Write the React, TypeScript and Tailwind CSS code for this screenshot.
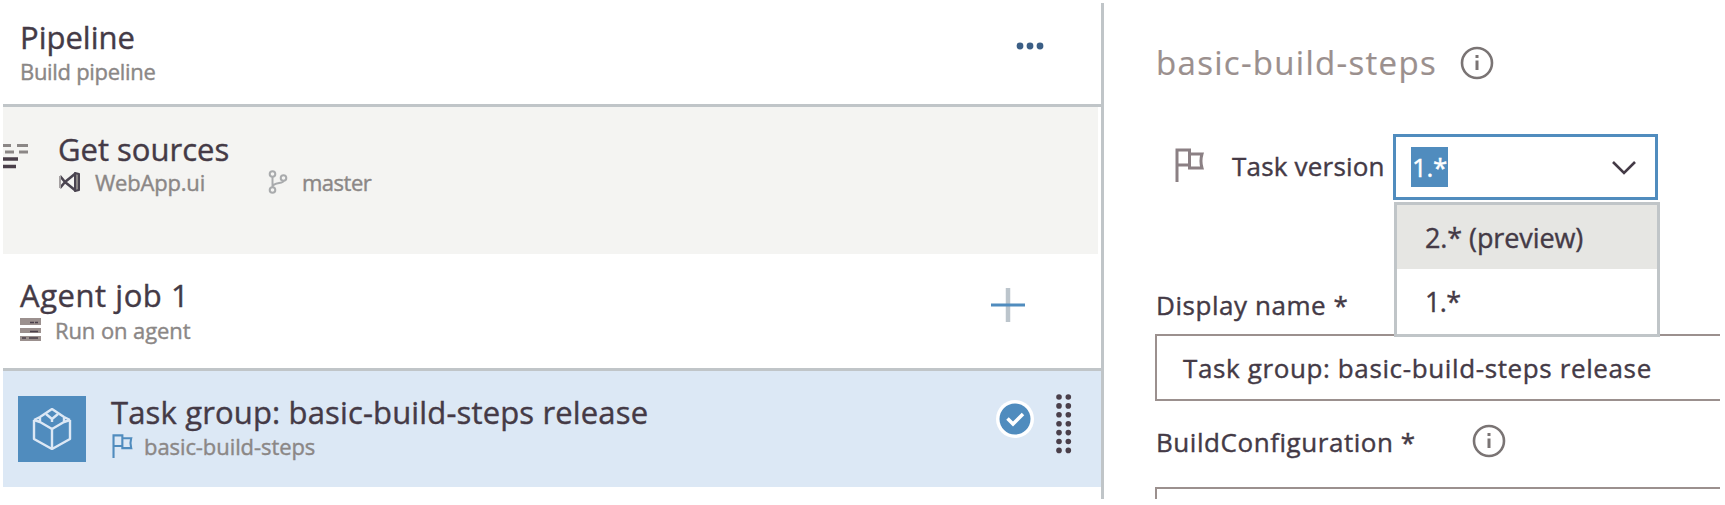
import type { ReactNode } from "react";

function Line({ className, children }: { className: string; children: ReactNode }) {
  return <span className={`block shrink-0 whitespace-nowrap ${className}`}>{children}</span>;
}

function Flag({ className }: { className: string }) {
  return (
    <svg className={className} viewBox="0 0 28 34" fill="none" stroke="currentColor" strokeWidth="3">
      <path d="M2 34V2H14.500V17H2M14.500 6H27C25.500 11 25.500 15 27 20H14.500V17" />
    </svg>
  );
}

function Info({ className }: { className: string }) {
  return (
    <svg className={className} viewBox="0 0 34 34" fill="none" stroke="currentColor" strokeWidth="2.6">
      <circle cx="17" cy="17" r="15" />
      <path d="M17 14.500V24M17 9V12" strokeWidth="3" />
    </svg>
  );
}

function Sources() {
  return (
    <svg className="h-[27px] w-[26px]" viewBox="0 0 26 27" fill="none">
      <path d="M0 2.500H8M14 2.500H25M2 9H11M16 9H25" stroke="#8b8786" strokeWidth="3" />
      <path d="M0 16H15M0 23.500H13" stroke="#4a3f4a" strokeWidth="3.500" />
    </svg>
  );
}

function VisualStudio() {
  return (
    <svg className="h-[22px] w-[23px]" viewBox="0 0 23 22" fill="none" stroke="#4a4450" strokeLinejoin="round">
      <path d="M2 5L7 11L2 17M7 11L18 2M7 11L18 20" strokeWidth="2.600" />
      <path d="M2 5V17" stroke="#a5a1a2" strokeWidth="2" />
      <path d="M17 2L21 3V19L17 20Z" fill="#8b8786" strokeWidth="2" />
    </svg>
  );
}

function Branch() {
  return (
    <svg className="h-[24px] w-[20px]" viewBox="0 0 20 24" fill="none" stroke="#a9abad" strokeWidth="2">
      <circle cx="4.500" cy="4" r="2.800" />
      <circle cx="4.500" cy="20" r="2.800" />
      <circle cx="15.500" cy="8" r="2.800" />
      <path d="M4.500 7V17M15.500 11C15.500 14 5 12 4.500 17" />
    </svg>
  );
}

function Server() {
  return (
    <svg className="h-[24px] w-[21px]" viewBox="0 0 21 24">
      <path d="M0 0H21V7H0ZM0 10H21V15H0ZM0 18H21V23H0Z" fill="#9b908e" />
      <path d="M10 4.500H14M15 4.500H18M10 13.500H18M2 20H6M9 20H18" stroke="#4a3f4a" strokeWidth="1.500" />
    </svg>
  );
}

function Cube() {
  return (
    <svg className="h-[42px] w-[40px]" viewBox="0 0 40 42" fill="none" stroke="#dce8f5" strokeWidth="2.400" strokeLinejoin="round">
      <path d="M2 12V31L20 41L38 31V12M20 21V41" />
      <path d="M2 12L8 9V14L20 21L32 14V9L38 12M8 9L20 1L32 9M8 14L2 12M32 14L38 12" />
      <path d="M14 6L20 11L26 6M20 11V14" />
    </svg>
  );
}

const gripRows = [0, 1, 2, 3, 4, 5, 6];

function Grip() {
  return (
    <svg className="h-[60px] w-[16px]" viewBox="0 0 16 60" fill="#4a3f4a">
      {gripRows.map((row) => (
        <g key={row}>
          <circle cx="3" cy={3 + row * 8.9} r="2.800" />
          <circle cx="12.300" cy={3 + row * 8.9} r="2.800" />
        </g>
      ))}
    </svg>
  );
}

export default function App() {
  return (
    <div className="flex h-[505px] w-[1725px] overflow-hidden bg-white pl-[3px] pt-[3px] font-['Open_Sans',sans-serif] text-[#443a46] [-webkit-text-stroke:0.4px]">
      <section className="flex h-[496px] w-[1101px] shrink-0 flex-col border-r-[3px] border-[#c0c5c8]">
        <header className="flex h-[104px] shrink-0 items-start justify-between border-b-[3px] border-[#c0c5c8] pl-[17px] pr-[57px]">
          <div className="pt-[14px]">
            <Line className="h-[39px] text-[31px] leading-[40px]">Pipeline</Line>
            <Line className="h-[30px] text-[22px] leading-[30px] tracking-[-0.3px] text-[#8b8786]">Build pipeline</Line>
          </div>
          <svg className="mt-[39px] h-[8px] w-[28px]" viewBox="0 0 28 8" fill="#3c5f86">
            <circle cx="4" cy="4" r="3.400" />
            <circle cx="14" cy="4" r="3.400" />
            <circle cx="24" cy="4" r="3.400" />
          </svg>
        </header>
        <div className="mr-[3px] flex h-[147px] shrink-0 bg-[#f4f4f2]">
          <div className="w-[55px] shrink-0 pt-[36px]">
            <Sources />
          </div>
          <div className="pt-[22px]">
            <Line className="h-[38px] text-[31px] leading-[40px]">Get sources</Line>
            <div className="flex h-[30px] items-center text-[22px] leading-[30px] text-[#8b8786]">
              <VisualStudio />
              <Line className="ml-[14px] w-[173px] tracking-[-0.2px]">WebApp.ui</Line>
              <Branch />
              <Line className="ml-[14px] tracking-[-0.5px]">master</Line>
            </div>
          </div>
        </div>
        <div className="flex h-[117px] shrink-0 items-start justify-between border-b-[3px] border-[#c0c5c8] pl-[17px] pr-[75px]">
          <div className="pt-[21px]">
            <Line className="h-[40px] text-[31px] leading-[40px] tracking-[0.55px]">Agent job 1</Line>
            <div className="flex h-[30px] items-center text-[22px] leading-[30px] text-[#8b8786]">
              <Server />
              <Line className="ml-[14px] tracking-[-0.1px]">Run on agent</Line>
            </div>
          </div>
          <svg className="mt-[33px] h-[36px] w-[36px]" viewBox="0 0 36 36" fill="none">
            <path d="M18 1V35" stroke="#bcc5cc" strokeWidth="4.500" />
            <path d="M1 18H35" stroke="#508cbe" strokeWidth="3" />
          </svg>
        </div>
        <div className="flex h-[116px] shrink-0 items-start bg-[#dce8f5] pl-[15px]">
          <div className="mt-[25px] flex h-[66px] w-[68px] shrink-0 items-center justify-center bg-[#508cbe]">
            <Cube />
          </div>
          <div className="ml-[25px] w-[885px] pt-[21px]">
            <Line className="h-[39px] text-[31px] leading-[40px] tracking-[0.15px]">Task group: basic-build-steps release</Line>
            <div className="flex h-[30px] items-center text-[22px] leading-[30px] text-[#8b8786]">
              <Flag className="h-[24px] w-[22px] text-[#508cbe]" />
              <Line className="ml-[11px] tracking-[-0.08px]">basic-build-steps</Line>
            </div>
          </div>
          <svg className="mt-[29px] h-[38px] w-[38px] shrink-0" viewBox="0 0 38 38" fill="none">
            <circle cx="19" cy="19" r="19" fill="#fff" />
            <circle cx="19" cy="19" r="15.500" fill="#508cbe" />
            <path d="M11.500 18.500L17 24L27 14" stroke="#fff" strokeWidth="3.500" />
          </svg>
          <div className="ml-[22px] mt-[23px]">
            <Grip />
          </div>
        </div>
      </section>

      <section className="flex h-[496px] w-[616px] shrink-0 flex-col pl-[51px]">
        <div className="flex h-[131px] shrink-0 items-start pt-[40px]">
          <Line className="w-[305px] pl-px text-[33px] leading-[40px] tracking-[1.3px] text-[#9b908e] [-webkit-text-stroke:0.2px]">basic-build-steps</Line>
          <Info className="mt-[3px] h-[34px] w-[34px] text-[#7a7474]" />
        </div>
        <div className="flex h-[66px] shrink-0 items-start pl-[19px]">
          <Flag className="mt-[14px] h-[34px] w-[30px] text-[#8b8084]" />
          <Line className="ml-[28px] w-[161px] pt-[12px] text-[26px] leading-[40px] tracking-[0.2px]">Task version</Line>
          <div className="relative flex h-[66px] w-[265px] shrink-0 items-start justify-between border-[3px] border-[#508cbe] pl-[15px] pr-[18px]">
            <Line className="mt-[10px] h-[40px] w-[37px] bg-[#508cbe] pl-px text-[26px] leading-[40px] tracking-[-0.4px] text-white">1.*</Line>
            <svg className="mt-[23px] h-[16px] w-[26px]" viewBox="0 0 26 16" fill="none" stroke="#443a46" strokeWidth="2.600">
              <path d="M2 2L13 13L24 2" />
            </svg>
            <div className="absolute left-[-2px] top-[65px] z-10 h-[135px] w-[266px] border-[3px] border-[#c0c5c8] bg-white">
              <Line className="h-[64px] bg-[#e6e6e3] pl-[28px] text-[27px] leading-[66px] tracking-[-0.1px]">2.* (preview)</Line>
              <Line className="h-[64px] pl-[28px] text-[27px] leading-[66px] tracking-[-0.6px]">1.*</Line>
            </div>
          </div>
        </div>
        <div className="flex h-[134px] shrink-0 items-end pb-[9px]">
          <Line className="pl-px text-[26px] leading-[40px] tracking-[0.55px]">Display name *</Line>
        </div>
        <div className="h-[67px] shrink-0 border-2 border-r-0 border-[#9b908e] pl-[26px]">
          <Line className="text-[26px] leading-[64px] tracking-[0.62px]">Task group: basic-build-steps release</Line>
        </div>
        <div className="flex h-[86px] shrink-0 items-start pt-[21px]">
          <Line className="w-[317px] pl-px text-[26px] leading-[40px] tracking-[0.55px]">BuildConfiguration *</Line>
          <Info className="mt-[2px] h-[34px] w-[34px] text-[#7a7474]" />
        </div>
        <div className="h-[12px] shrink-0 border-l-2 border-t-2 border-[#9b908e]" />
      </section>
    </div>
  );
}
